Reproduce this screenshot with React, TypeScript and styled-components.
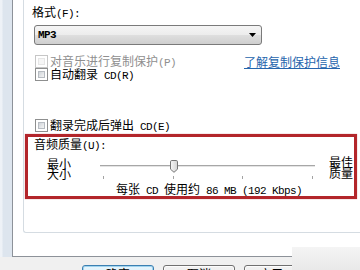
import React from "react";
import styled, { createGlobalStyle } from "styled-components";

const CJK = `"Noto Sans CJK SC", "Noto Sans", sans-serif`;
const MONO = `"Liberation Mono", "DejaVu Sans Mono", monospace`;

const GlobalStyle = createGlobalStyle`
  html, body { margin: 0; padding: 0; background: #f0f0f0; }
  body { font-family: ${CJK}; font-size: 12px; color: #000; }
`;

const Window = styled.div`
  position: relative;
  width: 360px;
  height: 270px;
  overflow: hidden;
  display: flex;
  flex-direction: column;
  background: #f0f0f0;
  font-family: ${CJK};
  font-size: 12px;
  color: #000;
`;

const Body = styled.div`
  display: flex;
  height: 257px;
  flex: none;
`;

const Frame = styled.div`
  width: 12px;
  flex: none;
  background: linear-gradient(90deg, #eef2f7 0, #eef2f7 2px, #dde5ee 3px, #dde5ee 100%);
`;

const Page = styled.div`
  flex: 1;
  background: #fff;
  border-left: 1px solid #8d9299;
  border-bottom: 1px solid #8d9299;
  padding-left: 10px;
  min-width: 0;
`;

const Group = styled.div`
  height: 232px;
  border-left: 1px solid #d5dce2;
  border-bottom: 1px solid #d5dce2;
  border-bottom-left-radius: 3px;
  display: flex;
  flex-direction: column;
`;

const A = styled.span<{ $bold?: boolean }>`
  font-family: ${MONO};
  font-size: 11px;
  letter-spacing: -0.6px;
  font-weight: ${(p) => (p.$bold ? 700 : 400)};
`;

const FieldLabel = styled.div`
  margin: 5px 0 0 8px;
  line-height: 14px;
`;

const Combo = styled.div`
  box-sizing: border-box;
  margin: 4px 0 0 10px;
  width: 228px;
  height: 20px;
  border: 1px solid #7a7a7a;
  border-radius: 3px;
  background: linear-gradient(#f5f5f5 0%, #ececec 50%, #dedede 52%, #cfcfcf 100%);
  display: flex;
  align-items: center;
  justify-content: space-between;
  padding: 0 5px 0 3px;
  line-height: 14px;
`;

const CheckRow = styled.div<{ $top: number }>`
  display: flex;
  align-items: center;
  height: 13px;
  margin: ${(p) => p.$top}px 0 0 11px;
`;

const Box = styled.span<{ $disabled?: boolean }>`
  box-sizing: border-box;
  width: 13px;
  height: 13px;
  flex: none;
  border: 1px solid ${(p) => (p.$disabled ? "#c6c6c6" : "#8e8f8f")};
  background: #fff;
  padding: 2px;
  display: flex;
  &::after {
    content: "";
    flex: 1;
    border: 1px solid ${(p) => (p.$disabled ? "#e6e6e6" : "#b7bcc2")};
    background: ${(p) =>
      p.$disabled
        ? "#f6f6f6"
        : "linear-gradient(135deg, #cfd3d8 0%, #e6e8ea 60%, #f4f4f4 100%)"};
  }
`;

const CheckText = styled.span<{ $disabled?: boolean }>`
  margin-left: 2px;
  line-height: 13px;
  white-space: nowrap;
  color: ${(p) => (p.$disabled ? "#8f8f8f" : "#000")};
`;

const Link = styled.span`
  margin-left: auto;
  margin-right: 20px;
  line-height: 13px;
  color: #2565ad;
  text-decoration: underline;
  white-space: nowrap;
`;

const RedBox = styled.div`
  box-sizing: border-box;
  margin: 2px 0 0 1px;
  width: 332px;
  height: 65px;
  border: 3px solid #b3262b;
  box-shadow: 0 0 1px rgba(179, 38, 43, 0.55);
  display: flex;
  flex-direction: column;
`;

const Title = styled.div`
  padding-left: 6px;
  line-height: 14px;
`;

const SliderRow = styled.div`
  display: flex;
  align-items: flex-start;
  height: 28px;
  padding-left: 19px;
`;

const SideLabel = styled.div<{ $lh: number; $top: number; $gap: number }>`
  width: 24px;
  flex: none;
  line-height: ${(p) => p.$lh}px;
  margin-top: ${(p) => p.$top}px;
  margin-left: ${(p) => p.$gap}px;
`;

const Slider = styled.div`
  position: relative;
  margin-left: 29px;
  width: 215px;
  height: 28px;
  flex: none;
`;

const Track = styled.div`
  margin-top: 12px;
  height: 0;
  border-top: 1px solid #a7a7a7;
  border-bottom: 1px solid #e4e4e4;
`;

const Ticks = styled.div`
  display: flex;
  justify-content: space-between;
  margin-top: 9px;
  padding: 0 2px 0 3px;
`;

const Tick = styled.span`
  width: 1px;
  height: 3px;
  background: #a3a3a3;
`;

const Thumb = styled.svg`
  position: absolute;
  left: 70px;
  top: 7px;
`;

const Caption = styled.div`
  padding-left: 88px;
  margin-top: 1px;
  line-height: 14px;
  white-space: nowrap;
`;

const ButtonBar = styled.div`
  display: flex;
  gap: 9px;
  padding: 8px 0 0 82px;
  height: 13px;
  overflow: hidden;
`;

const Button = styled.div<{ $default?: boolean }>`
  box-sizing: border-box;
  width: 72px;
  height: 23px;
  flex: none;
  border: 1px solid ${(p) => (p.$default ? "#3c7fb1" : "#707070")};
  border-radius: 3px;
  background: ${(p) =>
    p.$default
      ? "linear-gradient(#e8f5fc 0%, #d6eefa 50%, #bfe3f6 52%, #a9d9f2 100%)"
      : "linear-gradient(#f2f2f2 0%, #ebebeb 50%, #dddddd 52%, #cfcfcf 100%)"};
  box-shadow: inset 0 0 0 1px ${(p) => (p.$default ? "#9fd4ef" : "#fcfcfc")};
  text-align: center;
  line-height: 15px;
`;

const Veil = styled.div`
  position: absolute;
  right: 0;
  bottom: 0;
  width: 68px;
  height: 23px;
  background: linear-gradient(#f4f4f4, #e9e9e9);
`;

export default function App() {
  return (
    <>
      <GlobalStyle />
      <Window>
        <Body>
          <Frame />
          <Page>
            <Group>
              <FieldLabel>
                格式<A>(F):</A>
              </FieldLabel>
              <Combo>
                <A $bold>MP3</A>
                <svg width="7" height="4" viewBox="0 0 7 4">
                  <polygon points="0,0 7,0 3.5,4" fill="#000" />
                </svg>
              </Combo>
              <CheckRow $top={10}>
                <Box $disabled />
                <CheckText $disabled>
                  对音乐进行复制保护<A>(P)</A>
                </CheckText>
                <Link>了解复制保护信息</Link>
              </CheckRow>
              <CheckRow $top={0}>
                <Box />
                <CheckText>
                  自动翻录<A> CD(R)</A>
                </CheckText>
              </CheckRow>
              <CheckRow $top={38}>
                <Box />
                <CheckText>
                  翻录完成后弹出<A> CD(E)</A>
                </CheckText>
              </CheckRow>
              <RedBox>
                <Title>
                  音频质量<A>(U):</A>
                </Title>
                <SliderRow>
                  <SideLabel $lh={10} $top={6} $gap={0}>
                    最小
                    <br />
                    大小
                  </SideLabel>
                  <Slider>
                    <Track />
                    <Ticks>
                      <Tick />
                      <Tick />
                      <Tick />
                      <Tick />
                    </Ticks>
                    <Thumb width="8" height="13" viewBox="0 0 8 13">
                      <defs>
                        <linearGradient id="thumbFill" x1="0" y1="0" x2="1" y2="0">
                          <stop offset="0" stopColor="#f7f7f7" />
                          <stop offset="1" stopColor="#d3d3d3" />
                        </linearGradient>
                      </defs>
                      <path
                        d="M1.8,0.5 H6.2 Q7.5,0.5 7.5,1.8 V9.2 L4,12.3 L0.5,9.2 V1.8 Q0.5,0.5 1.8,0.5 Z"
                        fill="url(#thumbFill)"
                        stroke="#767676"
                        strokeWidth="1"
                      />
                    </Thumb>
                  </Slider>
                  <SideLabel $lh={11} $top={3} $gap={14}>
                    最佳
                    <br />
                    质量
                  </SideLabel>
                </SliderRow>
                <Caption>
                  每张<A> CD </A>使用约<A> 86 MB (192 Kbps)</A>
                </Caption>
              </RedBox>
            </Group>
          </Page>
        </Body>
        <ButtonBar>
          <Button $default>确定</Button>
          <Button>取消</Button>
          <Button>
            应用<A>(A)</A>
          </Button>
        </ButtonBar>
        <Veil />
      </Window>
    </>
  );
}
